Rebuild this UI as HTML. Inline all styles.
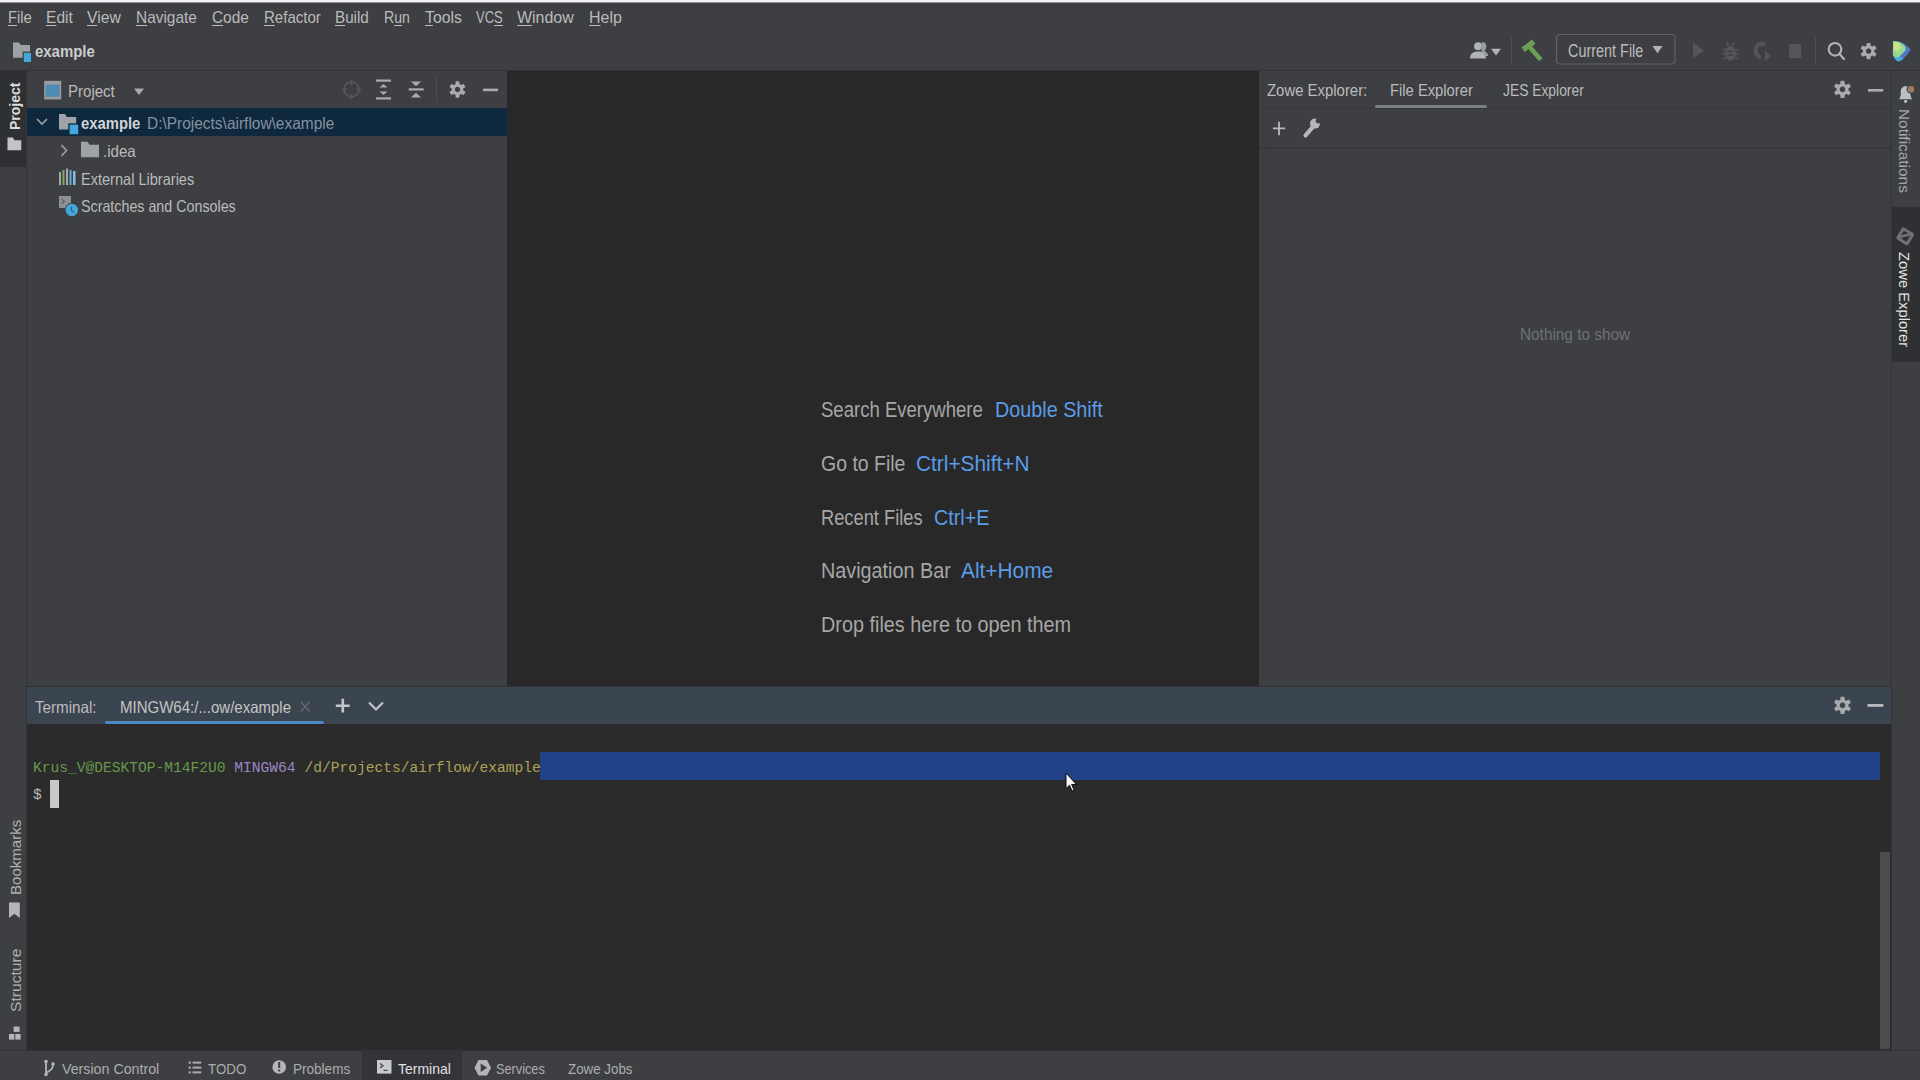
<!DOCTYPE html>
<html><head><meta charset="utf-8">
<style>
*{margin:0;padding:0;box-sizing:border-box}
html,body{width:1920px;height:1080px;overflow:hidden;background:#3d3f43;font-family:"Liberation Sans",sans-serif;color:#bbbbbb}
.a{position:absolute}
.t{position:absolute;white-space:pre;line-height:1}
.u{text-decoration:underline;text-decoration-thickness:1px;text-underline-offset:2px}
.m{position:absolute;white-space:pre;line-height:1;font-family:"Liberation Mono",monospace}
.rot{position:absolute;white-space:pre;line-height:1;transform-origin:0 0}
svg{position:absolute;overflow:visible}
</style></head><body>
<!-- top white strip -->
<div class="a" style="left:0;top:0;width:1920px;height:2px;background:#f4f4f4"></div>
<div class="a" style="left:0;top:2px;width:1920px;height:1px;background:#8e8f91"></div>

<!-- toolbar bottom border -->
<div class="a" style="left:0;top:70px;width:1920px;height:1px;background:#323335"></div>

<!-- left stripe -->
<div class="a" style="left:0;top:71px;width:27px;height:96px;background:#2e3033"></div>
<div class="a" style="left:26px;top:71px;width:1px;height:979px;background:#333437"></div>

<!-- project panel -->
<div class="a" style="left:27px;top:71px;width:480px;height:615px;background:#3d3f43"></div>
<div class="a" style="left:27px;top:108px;width:480px;height:28px;background:#0e283d"></div>

<!-- editor -->
<div class="a" style="left:507px;top:71px;width:752px;height:615px;background:#282828"></div>

<!-- zowe panel -->
<div class="a" style="left:1259px;top:71px;width:632px;height:615px;background:#3d3f43"></div>
<div class="a" style="left:1259px;top:108px;width:12px;height:578px;background:#3d3f3f"></div>
<div class="a" style="left:1259px;top:108px;width:632px;height:1px;background:#35373a"></div>
<div class="a" style="left:1259px;top:147px;width:632px;height:1.5px;background:#36383b"></div>
<div class="a" style="left:1375px;top:104.8px;width:112px;height:3.6px;border-radius:1.8px;background:#7b7e83"></div>

<!-- right stripe -->
<div class="a" style="left:1891px;top:71px;width:1px;height:979px;background:#333437"></div>
<div class="a" style="left:1892px;top:207px;width:28px;height:155px;background:#2e3033"></div>

<!-- terminal -->
<div class="a" style="left:27px;top:686px;width:1864px;height:1px;background:#2f3134"></div>
<div class="a" style="left:27px;top:687px;width:1864px;height:37px;background:#3b4550"></div>
<div class="a" style="left:27px;top:724px;width:1864px;height:326px;background:#2b2b2b"></div>
<div class="a" style="left:105px;top:721px;width:219px;height:3px;border-radius:1.5px;background:#4a88c7"></div>
<div class="a" style="left:540px;top:752px;width:1340px;height:28px;background:#224287"></div>
<div class="a" style="left:1880px;top:852px;width:10px;height:197px;background:#4b4d4f"></div>
<div class="a" style="left:50px;top:780px;width:9px;height:28px;background:#c8c8c8"></div>

<!-- status bar -->
<div class="a" style="left:0;top:1050px;width:1920px;height:1px;background:#333437"></div>
<div class="a" style="left:362px;top:1051px;width:100px;height:29px;background:#323438"></div>

<div class="t" style="left:7.6px;top:8.9px;transform-origin:0 0;transform:scaleX(0.868);font-size:17px;color:#bbbbbb;font-weight:400;"><span class="u">F</span>ile</div>
<div class="t" style="left:45.6px;top:8.9px;transform-origin:0 0;transform:scaleX(0.915);font-size:17px;color:#bbbbbb;font-weight:400;"><span class="u">E</span>dit</div>
<div class="t" style="left:86.6px;top:8.9px;transform-origin:0 0;transform:scaleX(0.925);font-size:17px;color:#bbbbbb;font-weight:400;"><span class="u">V</span>iew</div>
<div class="t" style="left:135.6px;top:8.9px;transform-origin:0 0;transform:scaleX(0.906);font-size:17px;color:#bbbbbb;font-weight:400;"><span class="u">N</span>avigate</div>
<div class="t" style="left:211.6px;top:8.9px;transform-origin:0 0;transform:scaleX(0.905);font-size:17px;color:#bbbbbb;font-weight:400;"><span class="u">C</span>ode</div>
<div class="t" style="left:263.6px;top:8.9px;transform-origin:0 0;transform:scaleX(0.884);font-size:17px;color:#bbbbbb;font-weight:400;"><span class="u">R</span>efactor</div>
<div class="t" style="left:334.6px;top:8.9px;transform-origin:0 0;transform:scaleX(0.894);font-size:17px;color:#bbbbbb;font-weight:400;"><span class="u">B</span>uild</div>
<div class="t" style="left:383.6px;top:8.9px;transform-origin:0 0;transform:scaleX(0.827);font-size:17px;color:#bbbbbb;font-weight:400;">R<span class="u">u</span>n</div>
<div class="t" style="left:424.6px;top:8.9px;transform-origin:0 0;transform:scaleX(0.927);font-size:17px;color:#bbbbbb;font-weight:400;"><span class="u">T</span>ools</div>
<div class="t" style="left:475.6px;top:8.9px;transform-origin:0 0;transform:scaleX(0.766);font-size:17px;color:#bbbbbb;font-weight:400;">VC<span class="u">S</span></div>
<div class="t" style="left:516.6px;top:8.9px;transform-origin:0 0;transform:scaleX(0.939);font-size:17px;color:#bbbbbb;font-weight:400;"><span class="u">W</span>indow</div>
<div class="t" style="left:588.6px;top:8.9px;transform-origin:0 0;transform:scaleX(0.938);font-size:17px;color:#bbbbbb;font-weight:400;"><span class="u">H</span>elp</div>
<div class="t" style="left:34.6px;top:44.0px;transform-origin:0 0;transform:scaleX(0.934);font-size:16px;color:#cdcdcd;font-weight:700;">example</div>
<div class="t" style="left:1567.6px;top:42.5px;transform-origin:0 0;transform:scaleX(0.824);font-size:17.5px;color:#bbbbbb;font-weight:400;">Current File</div>
<div class="t" style="left:67.6px;top:82.5px;transform-origin:0 0;transform:scaleX(0.911);font-size:16.5px;color:#bbbbbb;font-weight:400;">Project</div>
<div class="t" style="left:81.1px;top:115.8px;transform-origin:0 0;transform:scaleX(0.926);font-size:16px;color:#d4d4d4;font-weight:700;">example</div>
<div class="t" style="left:147.0px;top:115.3px;transform-origin:0 0;transform:scaleX(0.937);font-size:16.5px;color:#8592a0;font-weight:400;">D:\Projects\airflow\example</div>
<div class="t" style="left:103.3px;top:142.7px;transform-origin:0 0;transform:scaleX(0.914);font-size:16.5px;color:#bbbbbb;font-weight:400;">.idea</div>
<div class="t" style="left:81.1px;top:170.8px;transform-origin:0 0;transform:scaleX(0.882);font-size:16.5px;color:#bbbbbb;font-weight:400;">External Libraries</div>
<div class="t" style="left:81.1px;top:198.0px;transform-origin:0 0;transform:scaleX(0.865);font-size:16.5px;color:#bbbbbb;font-weight:400;">Scratches and Consoles</div>
<div class="t" style="left:1267.1px;top:82.1px;transform-origin:0 0;transform:scaleX(0.877);font-size:17px;color:#bbbbbb;font-weight:400;">Zowe Explorer:</div>
<div class="t" style="left:1389.6px;top:82.1px;transform-origin:0 0;transform:scaleX(0.868);font-size:17px;color:#bbbbbb;font-weight:400;">File Explorer</div>
<div class="t" style="left:1502.6px;top:82.1px;transform-origin:0 0;transform:scaleX(0.814);font-size:17px;color:#bbbbbb;font-weight:400;">JES Explorer</div>
<div class="t" style="left:1520.4px;top:325.6px;transform-origin:0 0;transform:scaleX(0.930);font-size:16.5px;color:#6f7174;font-weight:400;">Nothing to show</div>
<div class="t" style="left:821.3px;top:398.7px;transform-origin:0 0;transform:scaleX(0.843);font-size:22px;color:#a6a6a6;font-weight:400;">Search Everywhere</div>
<div class="t" style="left:994.6px;top:398.7px;transform-origin:0 0;transform:scaleX(0.899);font-size:22px;color:#5c9be6;font-weight:400;">Double Shift</div>
<div class="t" style="left:821.3px;top:452.6px;transform-origin:0 0;transform:scaleX(0.885);font-size:22px;color:#a6a6a6;font-weight:400;">Go to File</div>
<div class="t" style="left:915.6px;top:452.6px;transform-origin:0 0;transform:scaleX(0.948);font-size:22px;color:#5c9be6;font-weight:400;">Ctrl+Shift+N</div>
<div class="t" style="left:821.3px;top:507.2px;transform-origin:0 0;transform:scaleX(0.831);font-size:22px;color:#a6a6a6;font-weight:400;">Recent Files</div>
<div class="t" style="left:933.8px;top:507.2px;transform-origin:0 0;transform:scaleX(0.899);font-size:22px;color:#5c9be6;font-weight:400;">Ctrl+E</div>
<div class="t" style="left:821.3px;top:560.3px;transform-origin:0 0;transform:scaleX(0.899);font-size:22px;color:#a6a6a6;font-weight:400;">Navigation Bar</div>
<div class="t" style="left:961.2px;top:560.3px;transform-origin:0 0;transform:scaleX(0.948);font-size:22px;color:#5c9be6;font-weight:400;">Alt+Home</div>
<div class="t" style="left:821.3px;top:614.2px;transform-origin:0 0;transform:scaleX(0.901);font-size:22px;color:#a6a6a6;font-weight:400;">Drop files here to open them</div>
<div class="t" style="left:35.0px;top:698.6px;transform-origin:0 0;transform:scaleX(0.920);font-size:16.5px;color:#bbbbbb;font-weight:400;">Terminal:</div>
<div class="t" style="left:119.6px;top:698.6px;transform-origin:0 0;transform:scaleX(0.910);font-size:16.5px;color:#c4c4c4;font-weight:400;">MINGW64:/...ow/example</div>
<div class="t" style="left:62.1px;top:1061.7px;transform-origin:0 0;transform:scaleX(0.981);font-size:14.5px;color:#adadad;font-weight:400;">Version Control</div>
<div class="t" style="left:207.9px;top:1061.7px;transform-origin:0 0;transform:scaleX(0.920);font-size:14.5px;color:#adadad;font-weight:400;">TODO</div>
<div class="t" style="left:292.9px;top:1061.7px;transform-origin:0 0;transform:scaleX(0.934);font-size:14.5px;color:#adadad;font-weight:400;">Problems</div>
<div class="t" style="left:397.5px;top:1061.7px;transform-origin:0 0;transform:scaleX(0.965);font-size:14.5px;color:#e0e0e0;font-weight:400;">Terminal</div>
<div class="t" style="left:495.6px;top:1061.7px;transform-origin:0 0;transform:scaleX(0.878);font-size:14.5px;color:#adadad;font-weight:400;">Services</div>
<div class="t" style="left:568.3px;top:1061.7px;transform-origin:0 0;transform:scaleX(0.920);font-size:14.5px;color:#adadad;font-weight:400;">Zowe Jobs</div>
<div class="t" style="left:8.1px;top:129.9px;transform-origin:0 0;transform:rotate(-90deg) scaleX(0.966);font-size:14.5px;color:#dedede;font-weight:700;">Project</div>
<div class="t" style="left:7.8px;top:895.4px;transform-origin:0 0;transform:rotate(-90deg) scaleX(1.004);font-size:15px;color:#b0b0b0;font-weight:400;">Bookmarks</div>
<div class="t" style="left:7.8px;top:1012.4px;transform-origin:0 0;transform:rotate(-90deg) scaleX(1.042);font-size:15px;color:#b0b0b0;font-weight:400;">Structure</div>
<div class="t" style="left:1912.0px;top:108.6px;transform-origin:0 0;transform:rotate(90deg) scaleX(1.026);font-size:15px;color:#a8a8a8;font-weight:400;">Notifications</div>
<div class="t" style="left:1912.0px;top:251.6px;transform-origin:0 0;transform:rotate(90deg) scaleX(0.984);font-size:15px;color:#e2e2e2;font-weight:400;">Zowe Explorer</div>

<!-- terminal text -->
<div class="m" style="left:33px;top:760.6px;font-size:15.5px;transform-origin:0 0;transform:scaleX(0.941)"><span style="color:#67994d">Krus_V@DESKTOP-M14F2U0</span> <span style="color:#9c86c4">MINGW64</span> <span style="color:#aca257">/d/Projects/airflow/example</span></div>
<div class="m" style="left:33px;top:788.2px;font-size:15.5px;transform-origin:0 0;transform:scaleX(0.941);color:#bbbbbb">$</div>

<svg width="1920" height="1080" viewBox="0 0 1920 1080" style="left:0;top:0">

<!-- toolbar project icon -->
<path d="M13,42.5h6l1.6,2.4h9.4v12.9h-17z" fill="#9ea1a6"/>
<rect x="22.6" y="51.6" width="9.4" height="11.4" fill="#3d3f43"/>
<rect x="23.8" y="52.8" width="7.2" height="9.2" fill="#42a8dc"/>

<!-- project panel header: view icon -->
<rect x="44.2" y="80.8" width="17" height="18.7" fill="#9a9ca0"/>
<rect x="45.8" y="84.6" width="13.8" height="12.2" fill="#4d8bb3"/>
<!-- dropdown -->
<path d="M134,88.5h10l-5,6.5z" fill="#a9abae"/>
<!-- locate (dim) -->
<g fill="none" stroke="#56585c" stroke-width="1.6">
<circle cx="351.5" cy="89.5" r="7.5"/>
<path d="M351.5,80v5M351.5,94v5.5M342,89.5h5M356,89.5h5"/>
</g>
<!-- expand all -->
<g fill="#a9abae">
<rect x="376" y="79.5" width="15" height="2.2"/>
<rect x="376" y="97.3" width="15" height="2.2"/>
<path d="M383.5,84l-4,3.6h8z"/>
<path d="M383.5,95l-4,-3.6h8z"/>
</g>
<!-- collapse all -->
<g fill="#a9abae">
<rect x="408.7" y="88.3" width="15" height="2.2"/>
<path d="M411,81.5h10l-5,4.8z"/>
<path d="M411,97.5h10l-5,-4.8z"/>
</g>
<rect x="436" y="76" width="1" height="27" fill="#4b4d51"/>
<!-- gear panel -->

<g transform="translate(457.5,89.5)"><path fill="#a9abae" fill-rule="evenodd" d="M2.14,-5.28L1.75,-8.22L-1.75,-8.22L-2.14,-5.28L-3.51,-4.49L-6.24,-5.62L-7.99,-2.60L-5.64,-0.79L-5.64,0.79L-7.99,2.60L-6.24,5.62L-3.51,4.49L-2.14,5.28L-1.75,8.22L1.75,8.22L2.14,5.28L3.51,4.49L6.24,5.62L7.99,2.60L5.64,0.79L5.64,-0.79L7.99,-2.60L6.24,-5.62L3.51,-4.49Z M0,-2.7A2.7,2.7 0 1 0 0.01,-2.7Z"/></g>
<!-- minimize -->
<rect x="483" y="88.6" width="15" height="2.6" fill="#a9abae"/>

<!-- tree -->
<path d="M37,119l5,5l5,-5" fill="none" stroke="#9fa3a8" stroke-width="1.6"/>
<path d="M59,114h6l1.8,3h9.4v12.5h-17.2z" fill="#9ea3ab"/>
<rect x="68.3" y="123.3" width="11" height="12" fill="#0e283d"/>
<rect x="69.6" y="124.6" width="8.6" height="9.6" fill="#42a8dc"/>
<path d="M61.5,145l5,5.5l-5,5.5" fill="none" stroke="#9fa3a8" stroke-width="1.6"/>
<path d="M81,141.8h6.5l2,3h9.5v12.4h-18z" fill="#9ea1a6"/>
<!-- external libraries -->
<g>
<rect x="59" y="172" width="2" height="13" fill="#a6a8ab"/>
<rect x="62.5" y="170" width="2" height="15" fill="#7fae5a"/>
<rect x="66" y="168.5" width="2" height="16.5" fill="#a6a8ab"/>
<rect x="69.5" y="170" width="2" height="15" fill="#5ab0de"/>
<rect x="73" y="171" width="2.5" height="14" fill="#8fb8d4"/>
</g>
<!-- scratches -->
<rect x="59" y="196" width="12" height="12" fill="#8e9195"/>
<path d="M61.5,199l3,2.5l-3,2.5" fill="none" stroke="#5d6064" stroke-width="1.2"/>
<circle cx="71.8" cy="210" r="7.2" fill="#3d3f43"/>
<circle cx="71.8" cy="210" r="6.2" fill="#44a7da"/>
<path d="M71.5,206.5v4l2.5,2" fill="none" stroke="#2a6e96" stroke-width="1.4"/>

<!-- left stripe folder -->
<path d="M7.5,137.4h5.5l1.5,2.9h6.8v10h-13.8z" fill="#c2c4c7"/>
<!-- bookmark -->
<path d="M9,902.5h10.8v15.5l-5.4,-4.2l-5.4,4.2z" fill="#b3b5b8"/>
<!-- structure -->
<g fill="#b3b5b8">
<rect x="13.6" y="1026.5" width="6" height="5.4"/>
<rect x="9" y="1034" width="5.3" height="5.6"/>
<rect x="15.3" y="1034" width="5.3" height="5.6"/>
</g>

<!-- toolbar right -->
<g fill="#b1b3b6">
<circle cx="1478" cy="46.2" r="3.9"/>
<path d="M1470,58.5c0,-4.5 3,-7 8,-7c5,0 8,2.5 8,7z"/>
<path d="M1481.5,42.5c3,-0.8 5,1.2 4.8,4c-0.2,2.4 -1,3.8 -2.2,4.6c2.2,0.8 4,2 4,4.8h-3.5c-0.8,-2 -2,-3 -3,-3.6z" fill="#9b9ea1"/>
<path d="M1491,48.8h10l-5,6.6z"/>
</g>
<rect x="1511" y="37" width="1" height="27" fill="#4b4d51"/>
<g stroke="#6b9f55" stroke-linecap="butt"><path d="M1523.2,49.8L1533.8,41.6" stroke-width="5.6"/><path d="M1528.5,45.8L1540.8,59.8" stroke-width="4.6"/></g>
<rect x="1556.5" y="34.5" width="118.5" height="29.5" rx="3.5" fill="none" stroke="#606266" stroke-width="1.2"/>
<path d="M1652.5,46h10l-5,7.2z" fill="#b1b3b6"/>
<!-- disabled -->
<g fill="#545659">
<path d="M1693,42.5v16l11,-8z"/>
<ellipse cx="1730.4" cy="53.2" rx="5.6" ry="7.4"/>
<rect x="1789" y="44" width="12" height="14"/>
<path d="M1766,44.2c-1.2,-1.4 -3,-2.2 -5.2,-2.2c-4.2,0 -6.8,3.6 -6.8,8.4s2.6,8.3 6.8,8.3v-3.8c-2,0 -3.1,-2 -3.1,-4.5s1.1,-4.6 3.1,-4.6c1,0 1.8,0.4 2.4,1z"/>
<path d="M1765,51v10l5.8,-5z"/>
</g>
<g stroke="#545659" stroke-width="1.7">
<path d="M1726.5,42.5l2,3M1734.3,42.5l-2,3M1722.5,49.5h3M1735.3,49.5h3M1722,54h3M1735.8,54h3M1722.5,58.5h3M1735.3,58.5h3"/>
</g>
<path d="M1727.5,51.5h5.8M1727.5,55.3h5.8" stroke="#3d3f43" stroke-width="1.5"/>
<rect x="1815" y="37" width="1" height="27" fill="#4b4d51"/>
<g fill="none" stroke="#b1b3b6" stroke-width="2.1">
<circle cx="1835" cy="49.3" r="6.3"/>
<path d="M1839.8,54.2l4.8,5.6"/>
</g>
<g transform="translate(1868.6,51.1) scale(1.0)"><path fill="#a9abae" fill-rule="evenodd" d="M2.14,-5.28L1.75,-8.22L-1.75,-8.22L-2.14,-5.28L-3.51,-4.49L-6.24,-5.62L-7.99,-2.60L-5.64,-0.79L-5.64,0.79L-7.99,2.60L-6.24,5.62L-3.51,4.49L-2.14,5.28L-1.75,8.22L1.75,8.22L2.14,5.28L3.51,4.49L6.24,5.62L7.99,2.60L5.64,0.79L5.64,-0.79L7.99,-2.60L6.24,-5.62L3.51,-4.49Z M0,-2.7A2.7,2.7 0 1 0 0.01,-2.7Z"/></g>
<!-- logo -->
<path d="M1893,41C1900,40.5 1906,44 1910.6,49.5C1908,55 1902.5,60 1898.2,61.6C1895,60.5 1893,57 1892.8,52Z" fill="#4b78c6"/>
<path d="M1893,54C1894,58 1896,60.5 1898.2,61.6C1900.5,60.8 1902.5,59.6 1903.6,58.4L1899.5,56.5L1895,55Z" fill="#43addd"/>
<path d="M1893,41C1898,40.8 1902,43 1905,46.2L1905.8,50L1899.5,56.8C1896,58 1894,57.5 1892.9,55Z" fill="#99d692"/>
<path d="M1894,42L1899,42.5L1901.2,47.5L1897.5,51.5L1894,50Z" fill="#cbe286"/>
<!-- zowe panel -->
<path d="M1279,121.7v13.5M1273,128.4h12.2" stroke="#b9bbbe" stroke-width="1.8"/>
<g><path d="M1305.5,135.5L1312.5,127.3" stroke="#b5b7ba" stroke-width="4.2" stroke-linecap="round"/>
<circle cx="1315" cy="123.6" r="5" fill="#b5b7ba"/>
<circle cx="1318.6" cy="120.6" r="2.9" fill="#3d3f43"/></g>
<g transform="translate(1842.5,89.4) scale(1.05)"><path fill="#a9abae" fill-rule="evenodd" d="M2.14,-5.28L1.75,-8.22L-1.75,-8.22L-2.14,-5.28L-3.51,-4.49L-6.24,-5.62L-7.99,-2.60L-5.64,-0.79L-5.64,0.79L-7.99,2.60L-6.24,5.62L-3.51,4.49L-2.14,5.28L-1.75,8.22L1.75,8.22L2.14,5.28L3.51,4.49L6.24,5.62L7.99,2.60L5.64,0.79L5.64,-0.79L7.99,-2.60L6.24,-5.62L3.51,-4.49Z M0,-2.7A2.7,2.7 0 1 0 0.01,-2.7Z"/></g>
<rect x="1868" y="89" width="15.3" height="2.6" fill="#a9abae"/>

<!-- right stripe -->
<path d="M1899,99.2h13.2c-1.3,-1.6 -1.8,-3.2 -1.8,-5.6v-2.2c0,-3.2 -2.1,-5.2 -4.8,-5.2c-2.7,0 -4.8,2 -4.8,5.2v2.2c0,2.4 -0.5,4 -1.8,5.6z" fill="#bcbfc3"/>
<circle cx="1905.6" cy="101.3" r="1.6" fill="#bcbfc3"/>
<circle cx="1911" cy="89.2" r="4.4" fill="#3d3f43"/>
<circle cx="1911" cy="89.2" r="3.3" fill="#a27a60"/>
<g transform="translate(1905.2,236.3) rotate(32)">
<rect x="-7" y="-7" width="14" height="14" rx="2" fill="#6f7175"/>
<rect x="-4" y="-4" width="8" height="8" fill="#2e3033"/>
<path d="M3.5,-4.5L-4.5,3.5" stroke="#6f7175" stroke-width="2.6"/>
</g>

<!-- terminal header -->
<path d="M301,702l8.5,9.5M309.5,702l-8.5,9.5" stroke="#676b72" stroke-width="1.2"/>
<path d="M342.8,698.8v13.8M335.8,705.7h13.9" stroke="#c3c5c8" stroke-width="2.6"/>
<path d="M369,702.5l7,7l7,-7" fill="none" stroke="#c3c5c8" stroke-width="2.2"/>
<g transform="translate(1842.5,705.4) scale(1.05)"><path fill="#a9abae" fill-rule="evenodd" d="M2.14,-5.28L1.75,-8.22L-1.75,-8.22L-2.14,-5.28L-3.51,-4.49L-6.24,-5.62L-7.99,-2.60L-5.64,-0.79L-5.64,0.79L-7.99,2.60L-6.24,5.62L-3.51,4.49L-2.14,5.28L-1.75,8.22L1.75,8.22L2.14,5.28L3.51,4.49L6.24,5.62L7.99,2.60L5.64,0.79L5.64,-0.79L7.99,-2.60L6.24,-5.62L3.51,-4.49Z M0,-2.7A2.7,2.7 0 1 0 0.01,-2.7Z"/></g>
<rect x="1867.5" y="704" width="15.8" height="2.8" fill="#b9bbbe"/>

<!-- status bar -->
<g fill="none" stroke="#b3b5b8" stroke-width="1.8">
<path d="M46,1061.5v13.5M53,1064c0,5 -2,6 -7,9"/>
</g>
<circle cx="46" cy="1061.5" r="1.8" fill="#b3b5b8"/>
<circle cx="53" cy="1064" r="1.8" fill="#b3b5b8"/>
<circle cx="46" cy="1074.5" r="1.8" fill="#b3b5b8"/>
<g fill="#a9abae">
<rect x="188.6" y="1061.5" width="2.2" height="2.2"/><rect x="192.5" y="1061.6" width="8.8" height="2"/>
<rect x="188.6" y="1066.5" width="2.2" height="2.2"/><rect x="192.5" y="1066.6" width="8.8" height="2"/>
<rect x="188.6" y="1071.3" width="2.2" height="2.2"/><rect x="192.5" y="1071.4" width="8.8" height="2"/>
</g>
<circle cx="279.2" cy="1067" r="6.8" fill="#b3b5b8"/>
<rect x="278.2" y="1062" width="2" height="6" fill="#3d3f43"/>
<rect x="278.2" y="1069.5" width="2" height="2" fill="#3d3f43"/>
<rect x="377" y="1060" width="14.5" height="13.6" fill="#c8cacd"/>
<path d="M380,1063.5l3,2.2l-3,2.2M383.5,1070.3h4" fill="none" stroke="#45484c" stroke-width="1.3"/>
<path d="M478.5,1060h8.5l4,7.7l-4,7.7h-8.5l-4,-7.7z" fill="#b3b5b8"/>
<path d="M480.7,1063.5v8.6l6.5,-4.3z" fill="#3d3f43"/>

<!-- mouse cursor -->
<path d="M1066,773v15.6l3.5,-3.4l2.6,5.8l2,-0.9l-2.5,-5.6h4.9z" fill="#f6f6f6" stroke="#000" stroke-width="0.9"/>
</svg>

</body></html>
